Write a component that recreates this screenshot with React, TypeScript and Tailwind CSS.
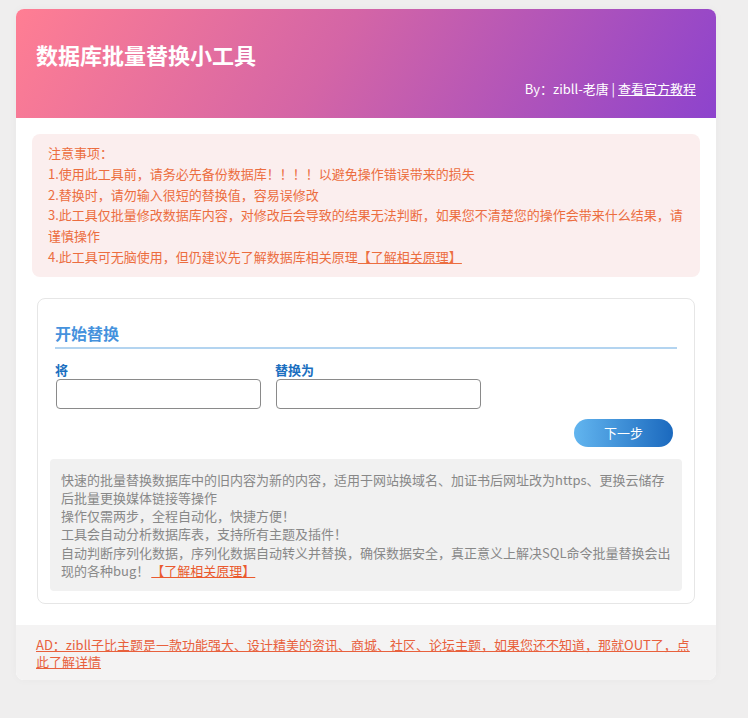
import { useState } from 'react'

const font = "font-['Noto_Sans_CJK_SC','Noto_Sans',sans-serif]"

export default function App() {
  const [from, setFrom] = useState('')
  const [to, setTo] = useState('')

  return (
    <div className={`min-h-screen bg-[#efeeee] pt-[9px] pb-10 ${font}`}>
      <div className="ml-4 w-[700px] rounded-lg bg-white overflow-hidden shadow-[0_0_10px_rgba(0,0,0,0.03)]">

        {/* header */}
        <div className="bg-[linear-gradient(120deg,#ff7e93_0%,#d465a6_45%,#8d43cd_100%)] px-5 pt-[30px] pb-[19px] text-white">
          <h1 className="text-[22px] font-bold leading-[31px]">数据库批量替换小工具</h1>
          <div className="mt-[9px] text-right text-[13px] leading-5">
            By：zibll-老唐 | <a href="#" className="underline">查看官方教程</a>
          </div>
        </div>

        <div className="px-4 pt-4 pb-[21px]">
          {/* notice */}
          <div className="rounded-lg bg-[#fbeeee] py-[9px] pl-4 pr-3 text-[13px] leading-[1.6] text-[#ec6d3f]">
            <p>注意事项：</p>
            <p>1.使用此工具前，请务必先备份数据库！！！！以避免操作错误带来的损失</p>
            <p>2.替换时，请勿输入很短的替换值，容易误修改</p>
            <p>3.此工具仅批量修改数据库内容，对修改后会导致的结果无法判断，如果您不清楚您的操作会带来什么结果，请谨慎操作</p>
            <p>
              4.此工具可无脑使用，但仍建议先了解数据库相关原理
              <a href="#" className="underline">【了解相关原理】</a>
            </p>
          </div>

          {/* replace form */}
          <div className="mx-[5px] mt-[21px] rounded-lg border border-[#e6e6e6] px-3 pt-[22px] pb-3">
            <div className="px-[5px]">
              <h2 className="border-b-2 border-[#b3d4f0] pb-0.5 text-[16px] font-bold leading-6 text-[#4592dd]">开始替换</h2>

              <div className="mt-[13px] flex gap-[14px]">
                <label className="flex flex-col">
                  <span className="text-[13px] font-bold leading-4 text-[#1b6fc0]">将</span>
                  <input
                    value={from}
                    onChange={e => setFrom(e.target.value)}
                    className="ml-px mt-px h-[30px] w-[205px] rounded border border-[#8a8a8a] px-2 text-[13px] outline-none"
                  />
                </label>
                <label className="flex flex-col">
                  <span className="text-[13px] font-bold leading-4 text-[#1b6fc0]">替换为</span>
                  <input
                    value={to}
                    onChange={e => setTo(e.target.value)}
                    className="ml-px mt-px h-[30px] w-[205px] rounded border border-[#8a8a8a] px-2 text-[13px] outline-none"
                  />
                </label>
              </div>

              <div className="mt-[10px] flex justify-end pr-1">
                <button className="h-[28px] w-[99px] rounded-full bg-[linear-gradient(90deg,#62b5ef,#1b69be)] text-[13px] text-white">
                  下一步
                </button>
              </div>
            </div>

            {/* description */}
            <div className="mt-3 rounded bg-[#f1f1f1] pt-3 pb-[11px] pl-[11px] pr-[9px] text-[13px] leading-[1.4] text-[#888]">
              <p>快速的批量替换数据库中的旧内容为新的内容，适用于网站换域名、加证书后网址改为https、更换云储存后批量更换媒体链接等操作</p>
              <p>操作仅需两步，全程自动化，快捷方便！</p>
              <p>工具会自动分析数据库表，支持所有主题及插件！</p>
              <p>
                自动判断序列化数据，序列化数据自动转义并替换，确保数据安全，真正意义上解决SQL命令批量替换会出现的各种bug！
                <a href="#" className="ml-0.5 text-[#ea5a2e] underline">【了解相关原理】</a>
              </p>
            </div>
          </div>
        </div>

        {/* ad footer */}
        <div className="bg-[#f4f3f3] px-5 pt-[11px] pb-[10px] text-[13px] leading-[17px]">
          <a href="#" className="text-[#e8603c] underline">
            AD：zibll子比主题是一款功能强大、设计精美的资讯、商城、社区、论坛主题，如果您还不知道，那就OUT了，点此了解详情
          </a>
        </div>
      </div>
    </div>
  )
}
